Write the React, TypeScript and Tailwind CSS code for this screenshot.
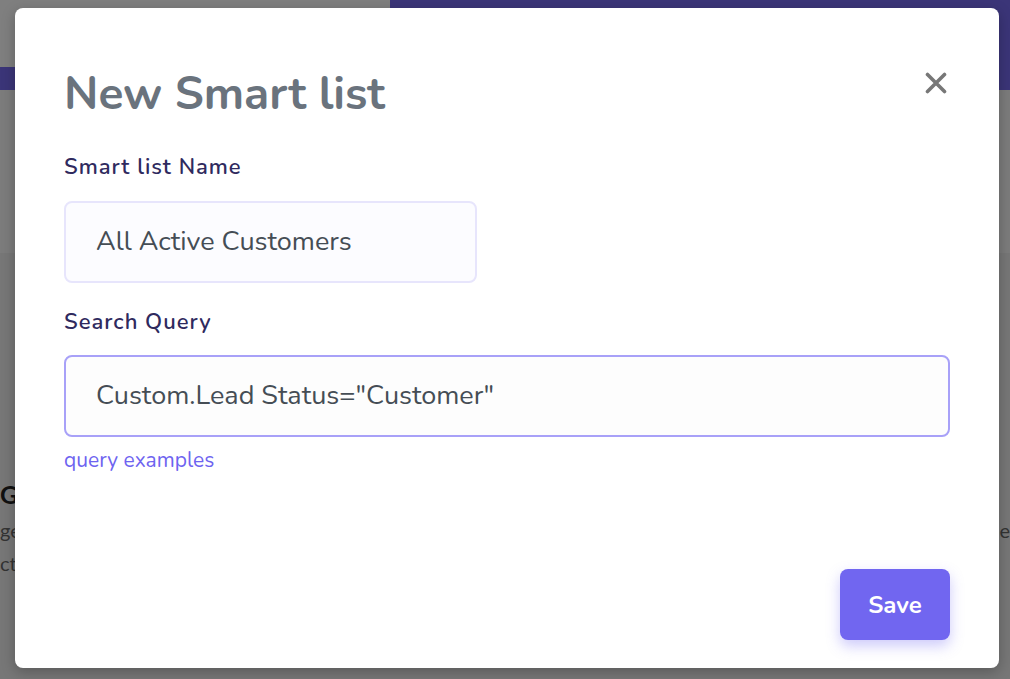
const font = { fontFamily: '"Nunito", "Lato", "Liberation Sans", sans-serif' };

function Backdrop() {
  // page behind the dimmed overlay
  return (
    <div className="absolute inset-0 flex flex-col">
      <div className="relative h-[90px] w-full">
        <div className="absolute left-0 top-[67px] h-[23px] w-full bg-[#3b3578]" />
        <div className="absolute left-[390px] top-0 h-[90px] w-[620px] bg-[#3b3578]" />
      </div>
      <div className="h-[163px] bg-[#7c7c7c]" />
      <div className="flex-1 bg-[#777777] pt-[226px]" style={{ fontFamily: '"Lato", sans-serif' }}>
        <div className="text-[25px] font-bold leading-[30px] text-[#111]">Gl</div>
        <div className="mt-[4px] flex justify-between text-[20px] leading-[34px] text-[#333]">
          <span>ge</span>
          <span>e</span>
        </div>
        <div className="text-[20px] leading-[32px] text-[#333]">cti</div>
      </div>
    </div>
  );
}

export default function App() {
  return (
    <div className="relative h-[679px] w-[1010px] overflow-hidden bg-[#7f7f7f]" style={font}>
      <Backdrop />

      <div className="absolute left-[15px] top-[8px] flex h-[660px] w-[984px] flex-col rounded-[8px] bg-white px-[49px] shadow-[0_4px_14px_rgba(0,0,0,0.25)]">
        <div className="flex items-start justify-between pt-[59px]">
          <h1 className="text-[46px] font-bold leading-[54px] text-[#6a737d]">New Smart list</h1>
          <button className="mr-[3px] mt-[5px]">
            <svg width="22" height="22" viewBox="0 0 22 22" fill="none" stroke="#777777" strokeWidth="3.6" strokeLinecap="round">
              <path d="M2.5 2.5 L19.5 19.5 M19.5 2.5 L2.5 19.5" />
            </svg>
          </button>
        </div>

        <label className="mt-[32px] text-[22px] font-semibold leading-[28px] tracking-[1px] text-[#2f2a5e]">
          Smart list Name
        </label>
        <div className="mt-[20px] flex h-[82px] w-[413px] items-center rounded-[8px] border-2 border-[#e7e5fc] bg-[#fcfcff] px-[30px] text-[27px] text-[#454d55]">
          All Active Customers
        </div>

        <label className="mt-[25px] text-[22px] font-semibold leading-[28px] tracking-[1px] text-[#2f2a5e]">
          Search Query
        </label>
        <div className="mt-[19px] flex h-[82px] w-full items-center rounded-[8px] border-2 border-[#a8a1f8] bg-[#fdfdfd] px-[30px] text-[27px] text-[#454d55]">
          Custom.Lead Status="Customer"
        </div>
        <a className="mt-[9px] text-[21px] leading-[28px] text-[#6e63f0]">query examples</a>

        <div className="mt-auto flex justify-end pb-[28px]">
          <button className="flex h-[71px] w-[110px] items-center justify-center rounded-[8px] bg-[#7166f0] text-[24px] font-bold text-white shadow-[0_6px_14px_rgba(113,102,240,0.35)]">
            Save
          </button>
        </div>
      </div>
    </div>
  );
}
